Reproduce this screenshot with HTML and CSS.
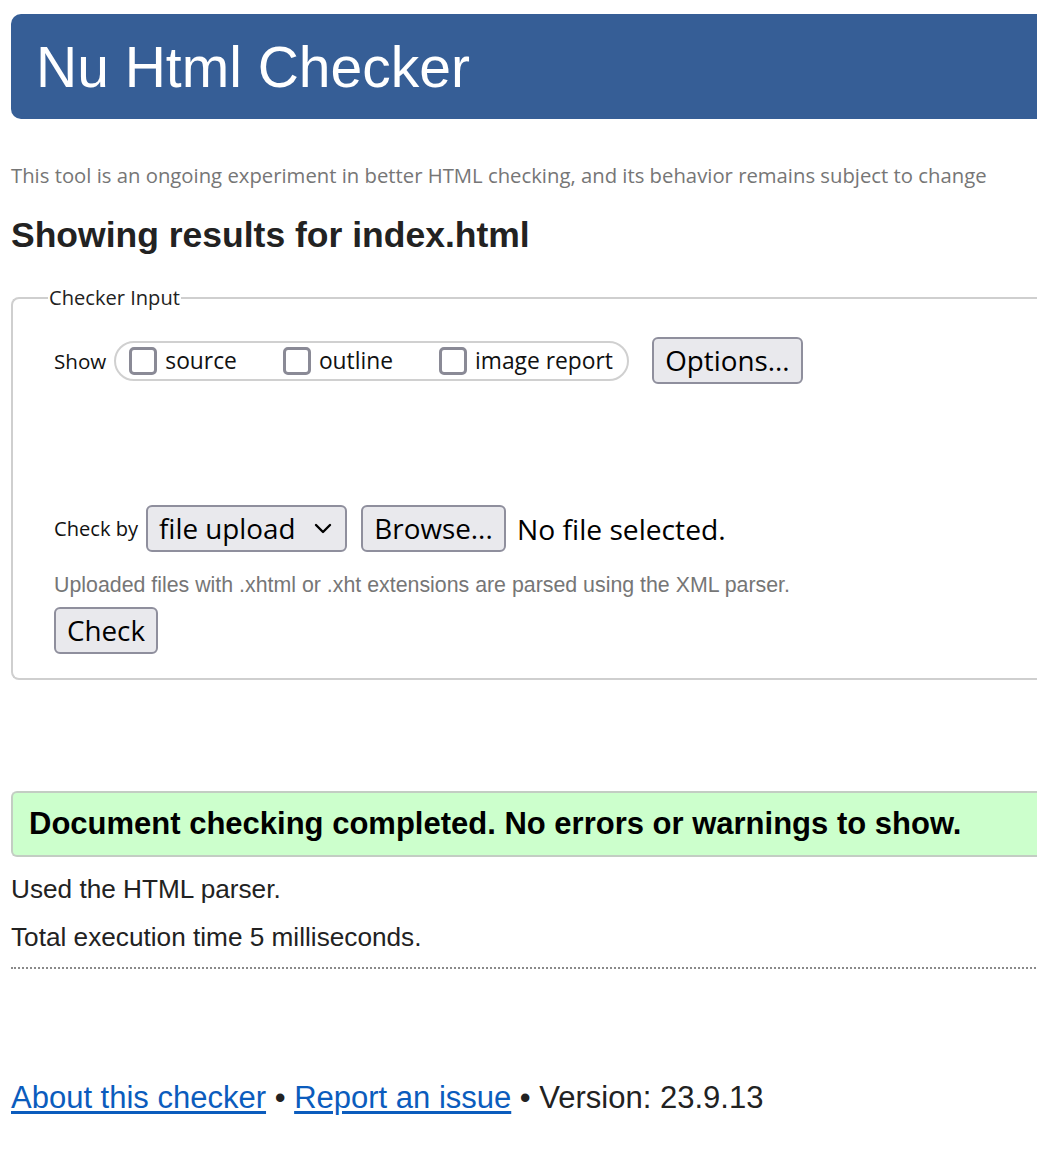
FILE: index.html
```html
<!DOCTYPE html>
<html lang="en">
<head>
<meta charset="utf-8">
<title>Nu Html Checker</title>
<link rel="stylesheet" href="styles.css">
</head>
<body>
<div class="page">
  <header class="banner"><h1 class="banner-title">Nu Html Checker</h1></header>
  <p class="tagline">This tool is an ongoing experiment in better HTML checking, and its behavior remains subject to change</p>
  <h2 class="results-title">Showing results for index.html</h2>
  <fieldset class="checker">
    <legend class="checker-legend">Checker Input</legend>
    <div class="row show-row">
      <span class="row-label">Show</span>
      <div class="pill">
        <label class="opt"><span class="box"></span>source</label>
        <label class="opt"><span class="box"></span>outline</label>
        <label class="opt"><span class="box"></span>image report</label>
      </div>
      <button class="ctl options-btn" type="button">Options...</button>
    </div>
    <div class="row check-row">
      <span class="row-label row-label-sm">Check by</span>
      <div class="ctl select">file upload<svg class="chev" width="18" height="11" viewBox="0 0 18 11"><path d="M2 2 L9 9 L16 2" fill="none" stroke="#000" stroke-width="2.4" stroke-linecap="round" stroke-linejoin="round"/></svg></div>
      <button class="ctl browse-btn" type="button">Browse...</button>
      <span class="nofile">No file selected.</span>
    </div>
    <p class="note">Uploaded files with .xhtml or .xht extensions are parsed using the XML parser.</p>
    <button class="ctl check-btn" type="button">Check</button>
  </fieldset>
  <div class="success">Document checking completed. No errors or warnings to show.</div>
  <p class="stat stat-first">Used the HTML parser.</p>
  <p class="stat stat-second">Total execution time 5 milliseconds.</p>
  <div class="divider"></div>
  <p class="footer"><a href="#" class="link">About this checker</a> • <a href="#" class="link">Report an issue</a> • Version: 23.9.13</p>
</div>
</body>
</html>
```

FILE: styles.css
```css
html, body {
  margin: 0;
  padding: 0;
  overflow: hidden;
  background: #fff;
}
body {
  width: 1037px;
  height: 1162px;
}
.page {
  padding: 14px 0 0 11px;
  width: 1100px;
  color: #222;
  font-family: "Liberation Sans", Arial, sans-serif;
}
.banner {
  background: #365e96;
  height: 105px;
  border-radius: 10px 0 0 10px;
  padding-left: 25px;
  display: flex;
  align-items: center;
}
.banner-title {
  margin: 0;
  font-family: "Liberation Sans", Arial, sans-serif;
  font-weight: normal;
  font-size: 57px;
  line-height: 1;
  color: #fff;
  position: relative;
  top: 1px;
}
.tagline {
  margin: 44px 0 0;
  font-family: "Open Sans", "Noto Sans", sans-serif;
  font-size: 20.3px;
  line-height: 24px;
  color: #767676;
}
.results-title {
  margin: 28px 0 0;
  font-family: "Liberation Sans", Arial, sans-serif;
  font-size: 35.5px;
  line-height: 40px;
  font-weight: bold;
  color: #222;
}
.checker {
  margin: 31px 0 0;
  border: 2px solid #cfcfcf;
  border-right: none;
  border-radius: 8px 0 0 8px;
  padding: 0 0 24px 41px;
  min-width: 0;
}
.checker-legend {
  margin-left: -6px;
  padding: 0 1px;
  font-family: "Open Sans", "Noto Sans", sans-serif;
  font-size: 20.1px;
  line-height: 24px;
  color: #222;
}
.row {
  display: flex;
  align-items: center;
  font-family: "Open Sans", "Noto Sans", sans-serif;
}
.show-row {
  margin-top: 27px;
  height: 47px;
}
.row-label {
  font-size: 20.6px;
  color: #111;
  margin-right: 8px;
}
.row-label-sm {
  font-size: 20.1px;
}
.pill {
  display: flex;
  align-items: center;
  height: 36px;
  border: 2px solid #d0d0d0;
  border-radius: 20px;
  padding: 0 14px 0 13px;
  gap: 46px;
}
.opt {
  display: flex;
  align-items: center;
  gap: 8px;
  font-size: 22.8px;
  color: #111;
}
.box {
  display: inline-block;
  flex: none;
  width: 22px;
  height: 22px;
  border: 3px solid #8a8a96;
  border-radius: 5px;
  background: #fff;
}
.ctl {
  box-sizing: border-box;
  font-family: "Open Sans", "Noto Sans", sans-serif;
  font-size: 27.8px;
  color: #000;
  background: #e9e9ed;
  border: 2px solid #8f8f9d;
  border-radius: 6px;
  height: 47px;
  display: flex;
  align-items: center;
  padding: 0 12px;
  line-height: 1;
}
.options-btn {
  margin-left: 23px;
  width: 151px;
  justify-content: center;
}
.check-row {
  margin-top: 121px;
  height: 47px;
}
.select {
  width: 201px;
  height: 47px;
  padding-left: 11px;
  justify-content: space-between;
  padding-right: 13px;
}
.chev {
  display: block;
}
.browse-btn {
  margin-left: 14px;
  width: 145px;
  justify-content: center;
}
.nofile {
  margin-left: 11px;
  font-size: 28.2px;
  color: #000;
}
.note {
  margin: 21px 0 0;
  font-family: "Liberation Sans", Arial, sans-serif;
  font-size: 21.35px;
  line-height: 24px;
  color: #767676;
}
.check-btn {
  margin-top: 10px;
  width: 104px;
  justify-content: center;
}
.success {
  margin-top: 111px;
  box-sizing: border-box;
  height: 66px;
  background: #ccffcc;
  border: 2px solid #c3cdc3;
  border-right: none;
  border-radius: 6px 0 0 6px;
  padding-left: 16px;
  display: flex;
  align-items: center;
  font-family: "Liberation Sans", Arial, sans-serif;
  font-weight: bold;
  font-size: 31px;
  color: #000;
}
.stat {
  margin: 0;
  font-family: "Liberation Sans", Arial, sans-serif;
  font-size: 26.2px;
  line-height: 30px;
  color: #222;
}
.stat-first {
  margin-top: 17px;
}
.stat-second {
  margin-top: 18px;
}
.divider {
  margin-top: 15px;
  border-top: 2px dotted #8a8a8a;
}
.footer {
  margin: 111px 0 0;
  font-family: "Liberation Sans", Arial, sans-serif;
  font-size: 31px;
  line-height: 36px;
  color: #222;
}
.link {
  color: #0b5cbd;
  text-decoration: underline;
  text-underline-offset: 3px;
}
```
